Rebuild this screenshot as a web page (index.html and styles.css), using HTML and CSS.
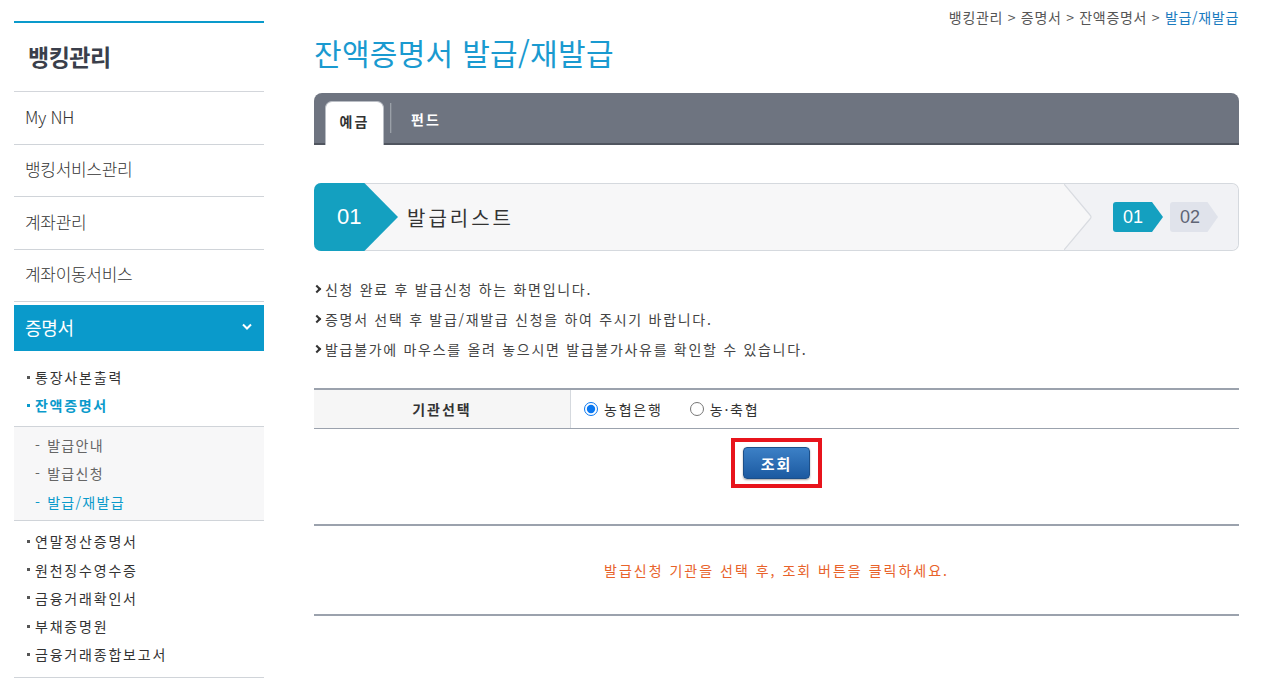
FILE: index.html
```html
<!DOCTYPE html>
<html lang="ko">
<head>
<meta charset="utf-8">
<title>잔액증명서 발급/재발급</title>
<link rel="stylesheet" href="styles.css">
</head>
<body>
<div class="wrap">
  <aside class="sidebar">
    <h2 class="side-title">뱅킹관리</h2>
    <ul class="menu">
      <li class="menu-item">My NH</li>
      <li class="menu-item">뱅킹서비스관리</li>
      <li class="menu-item">계좌관리</li>
      <li class="menu-item">계좌이동서비스</li>
      <li class="menu-item active">증명서
        <svg class="chev" width="10" height="7" viewBox="0 0 10 7"><path d="M1 1.5 L5 5.5 L9 1.5" fill="none" stroke="#fff" stroke-width="2"/></svg>
      </li>
    </ul>
    <ul class="sub sub-first">
      <li class="sub-item">통장사본출력</li>
      <li class="sub-item on">잔액증명서</li>
    </ul>
    <ul class="subsub">
      <li class="ss-item">발급안내</li>
      <li class="ss-item">발급신청</li>
      <li class="ss-item on">발급/재발급</li>
    </ul>
    <ul class="sub sub-last">
      <li class="sub-item">연말정산증명서</li>
      <li class="sub-item">원천징수영수증</li>
      <li class="sub-item">금융거래확인서</li>
      <li class="sub-item">부채증명원</li>
      <li class="sub-item">금융거래종합보고서</li>
    </ul>
  </aside>

  <main class="main">
    <div class="crumbs">뱅킹관리 &gt; 증명서 &gt; 잔액증명서 &gt; <span class="crumb-on">발급/재발급</span></div>
    <h1 class="title">잔액증명서 발급/재발급</h1>

    <div class="tabs">
      <div class="tab on">예금</div>
      <div class="tab-sep"></div>
      <div class="tab">펀드</div>
    </div>

    <div class="step">
      <div class="step-num">01</div>
      <div class="step-name">발급리스트</div>
      <svg class="step-chev" width="30" height="66" viewBox="0 0 30 66"><path d="M0 0 L26 31 Q28 33 26 35 L0 66 Z" fill="#f7f7f8"/><path d="M0 0 L26 31 Q28 33 26 35 L0 66" fill="none" stroke="#d9dce1" stroke-width="1.2"/></svg>
      <div class="step-right">
        <span class="badge cur">01</span>
        <span class="badge next">02</span>
      </div>
    </div>

    <ul class="notes">
      <li>신청 완료 후 발급신청 하는 화면입니다.</li>
      <li>증명서 선택 후 발급/재발급 신청을 하여 주시기 바랍니다.</li>
      <li>발급불가에 마우스를 올려 놓으시면 발급불가사유를 확인할 수 있습니다.</li>
    </ul>

    <div class="form-row">
      <div class="form-label">기관선택</div>
      <div class="form-field">
        <label class="radio"><input type="radio" name="org" checked>농협은행</label>
        <label class="radio"><input type="radio" name="org">농·축협</label>
      </div>
    </div>

    <div class="btn-area">
      <span class="highlight"><button class="btn">조회</button></span>
    </div>

    <div class="result">발급신청 기관을 선택 후, 조회 버튼을 클릭하세요.</div>
  </main>
</div>
</body>
</html>
```

FILE: styles.css
```css
* { box-sizing: border-box; }
html, body { margin: 0; padding: 0; background: #fff; }
body {
  font-family: "Noto Sans CJK KR", "Noto Sans", "Liberation Sans", sans-serif;
  color: #333;
  width: 1266px;
  height: 681px;
  overflow: hidden;
}
ul { list-style: none; margin: 0; padding: 0; }

.wrap {
  display: flex;
  gap: 50px;
  padding-left: 14px;
}

/* sidebar */
.sidebar {
  width: 250px;
  flex: none;
  margin-top: 21px;
  border-top: 2px solid #0a9acb;
}
.side-title {
  margin: 0;
  height: 69px;
  display: flex;
  align-items: center;
  padding-left: 14px;
  padding-bottom: 2px;
  font-size: 23px;
  font-weight: 700;
  color: #3a3f4b;
  letter-spacing: -0.5px;
  border-bottom: 1px solid #d3d6db;
}
.menu-item {
  height: 52.5px;
  display: flex;
  align-items: center;
  padding-left: 11px;
  padding-bottom: 3px;
  font-size: 17px;
  font-weight: 300;
  color: #333;
  border-bottom: 1.5px solid #d0d4d9;
  letter-spacing: -0.3px;
}
.menu-item.active {
  margin-top: 3px;
  height: 46px;
  background: #0a9acb;
  color: #fff;
  border-bottom: none;
  justify-content: space-between;
  padding-right: 12px;
  font-weight: 400;
  font-size: 18px;
}
.sub { border-bottom: 1px solid #d0d4d9; }
.sub-first { padding: 12px 0 6px; }
.sub-last { padding: 6px 0 8px; }
.sub-item {
  height: 28.3px;
  display: flex;
  align-items: center;
  padding-left: 13px;
  font-size: 14px;
  color: #333;
  letter-spacing: 1.8px;
}
.sub-item::before {
  content: "";
  width: 3px;
  height: 3px;
  background: #555;
  margin-right: 5px;
}
.sub-item.on { color: #0a9acb; font-weight: 700; letter-spacing: 1.7px; }
.sub-item.on::before { background: #0a9acb; }
.subsub {
  background: #f7f7f8;
  padding: 4px 0 4px;
  border-bottom: 1.5px solid #d0d4d9;
}
.ss-item {
  height: 28.5px;
  display: flex;
  align-items: center;
  padding-left: 21px;
  font-size: 14px;
  color: #666;
  letter-spacing: 1.3px;
}
.ss-item::before { content: "-"; margin-right: 6px; }
.ss-item.on { color: #0a9acb; }

/* main */
.main { width: 925px; flex: none; }
.crumbs {
  height: 36px;
  text-align: right;
  font-size: 14px;
  color: #555;
  padding-top: 7px;
  letter-spacing: 0.7px;
}
.crumb-on { color: #1a7bbf; }
.title {
  margin: 0;
  height: 57px;
  font-size: 30px;
  font-weight: 400;
  color: #1a9ad0;
  line-height: 32px;
  letter-spacing: 0.3px;
}

.tabs {
  height: 52px;
  background: #6e7480;
  border-radius: 8px 8px 0 0;
  border-bottom: 2px solid #50555f;
  display: flex;
  align-items: flex-end;
  padding-left: 11px;
}
.tab {
  height: 50px;
  display: flex;
  align-items: center;
  justify-content: center;
  font-size: 14px;
  font-weight: 700;
  color: #fff;
  padding: 0 19px 2px;
  letter-spacing: 2px;
  margin-bottom: -2px;
}
.tab.on {
  width: 59px;
  height: 44px;
  padding: 0 0 5px;
  background: #fff;
  color: #333;
  border-radius: 7px 7px 0 0;
  border: 1px solid #b9bdc4;
  border-bottom: none;
}
.tab-sep {
  width: 2px;
  height: 30px;
  background: #9aa0a8;
  border-right: 1px solid #7d838d;
  margin: 0 0 10px 6px;
  align-self: flex-end;
}

.step {
  margin-top: 38px;
  height: 68px;
  display: flex;
  align-items: stretch;
  background: #f7f7f8;
  border: 1px solid #d5d9de;
  border-left: none;
  border-radius: 7px;
}
.step-num {
  width: 84px;
  margin: -1px 0;
  background: #14a0c0;
  clip-path: polygon(0 0, 60% 0, 100% 50%, 60% 100%, 0 100%);
  border-radius: 7px 0 0 7px;
  color: #fff;
  font-size: 22px;
  display: flex;
  align-items: center;
  padding-left: 23px;
  font-family: "Liberation Sans", Arial, sans-serif;
}
.step-name {
  flex: 1;
  display: flex;
  align-items: center;
  padding-left: 9px;
  font-size: 20px;
  color: #333;
  letter-spacing: 3px;
}
.step-chev { flex: none; display: block; background: #f1f2f5; }
.step-right {
  width: 144px;
  background: #f1f2f5;
  border-radius: 0 7px 7px 0;
  display: flex;
  align-items: center;
  padding-left: 19px;
  gap: 7px;
}
.badge {
  height: 30px;
  display: flex;
  align-items: center;
  font-size: 18px;
  font-family: "Liberation Sans", Arial, sans-serif;
  padding-left: 10px;
  border-radius: 3px 0 0 3px;
}
.badge.cur {
  width: 50px;
  background: #14a0c0;
  color: #fff;
  clip-path: polygon(0 0, 78% 0, 100% 50%, 78% 100%, 0 100%);
}
.badge.next {
  width: 48px;
  background: #e0e3eb;
  color: #5f6575;
  clip-path: polygon(0 0, 78% 0, 100% 50%, 78% 100%, 0 100%);
}

.notes { margin-top: 23px; }
.notes li {
  height: 30px;
  display: flex;
  align-items: center;
  font-size: 14px;
  color: #444;
  letter-spacing: 1.7px;
}
.notes li::before {
  content: "";
  width: 4px;
  height: 4px;
  border-top: 2px solid #333;
  border-right: 2px solid #333;
  transform: rotate(45deg);
  margin: 0 5px 0 0;
}

.form-row {
  margin-top: 24px;
  height: 41px;
  display: flex;
  border-top: 2px solid #9ba2ad;
  border-bottom: 1px solid #9ba2ad;
}
.form-label {
  width: 257px;
  background: #f6f6f6;
  border-right: 1px solid #d5d9de;
  display: flex;
  align-items: center;
  justify-content: center;
  font-size: 14px;
  font-weight: 700;
  color: #333;
  letter-spacing: 2px;
}
.form-field {
  display: flex;
  align-items: center;
  padding-left: 13px;
  gap: 27px;
  font-size: 14px;
  color: #333;
  letter-spacing: 1.8px;
}
.radio { display: flex; align-items: center; }
.radio input { margin: 0 6px 0 0; width: 14px; height: 14px; accent-color: #0b78f0; }

.btn-area {
  height: 97px;
  display: flex;
  justify-content: center;
  padding-top: 9px;
  border-bottom: 2px solid #9ba2ad;
}
.highlight {
  display: inline-flex;
  height: 50px;
  border: 4px solid #e8141c;
  padding: 5px 8px;
}
.btn {
  width: 67px;
  height: 32px;
  border: 1px solid #1d4f88;
  border-radius: 4px;
  background: linear-gradient(#3c80c6, #1c5aa1);
  color: #fff;
  font-family: "Noto Sans CJK KR", sans-serif;
  font-size: 15px;
  font-weight: 700;
  letter-spacing: 2px;
  box-shadow: 0 1px 2px rgba(0,0,0,0.35);
  padding: 0;
}

.result {
  height: 90px;
  display: flex;
  align-items: center;
  justify-content: center;
  font-size: 14px;
  color: #e8622a;
  letter-spacing: 2px;
  border-bottom: 2px solid #9ba2ad;
}
```
